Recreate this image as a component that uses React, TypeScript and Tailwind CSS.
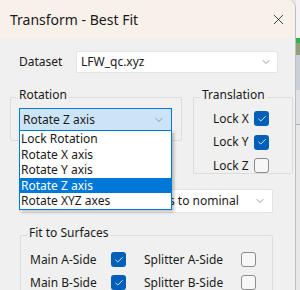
import React from 'react';
import { Check, ChevronDown, X } from 'lucide-react';

// Чекбокс в стиле Windows 11
function Box({ checked }: { checked?: boolean }) {
  return checked ? (
    <span className="w-[15px] h-[15px] rounded-[3px] bg-[#005fb8] flex items-center justify-center shrink-0">
      <Check className="w-[10px] h-[10px] text-white" strokeWidth={2} />
    </span>
  ) : (
    <span className="w-[15px] h-[15px] rounded-[3px] border border-[#8d8d8d] bg-[#f7f7f7] shrink-0" />
  );
}

function Group({ label, className, children }: { label: string; className: string; children?: React.ReactNode }) {
  return (
    <div className={`border border-[#dcdcdc] rounded-[2px] ${className}`}>
      <span className="block w-fit -mt-[11px] ml-[6px] px-[2px] bg-[#f0f0f0] leading-[16px]">{label}</span>
      {children}
    </div>
  );
}

const options = ['Lock Rotation', 'Rotate X axis', 'Rotate Y axis', 'Rotate Z axis', 'Rotate XYZ axes'];

export default function App() {
  return (
    <div className="w-[300px] h-[290px] flex bg-[#e6e6e6] overflow-hidden font-['Noto_Sans',sans-serif] text-[12px] text-[#1a1a1a]">
      {/* Окно диалога */}
      <div className="relative w-[296px] h-full flex flex-col rounded-tr-[8px] overflow-hidden border-r border-[#bdbdbd] bg-[#f0f0f0]">
        <header className="h-[38px] shrink-0 bg-[#f8f1ea] flex items-center justify-between pl-[10px] pr-[8px]">
          <span className="text-[14px]">Transform - Best Fit</span>
          <X className="w-[17px] h-[17px] text-[#222]" strokeWidth={1.2} />
        </header>

        <div className="flex-1 flex flex-col">
          {/* Dataset */}
          <div className="flex items-center mt-[13px] pl-[19px]">
            <span className="w-[57px]">Dataset</span>
            <div className="w-[202px] h-[22px] bg-white border border-[#e3e3e3] rounded-[2px] flex items-center justify-between pl-[4px] pr-[5px]">
              <span>LFW_qc.xyz</span>
              <ChevronDown className="w-[12px] h-[12px] text-[#777]" strokeWidth={1.5} />
            </div>
          </div>

          {/* Rotation / Translation */}
          <div className="flex items-start mt-[24px] pl-[10px]">
            <Group label="Rotation" className="w-[172px] h-[44px]">
              <div className="mt-[5px] ml-[8px] w-[153px] h-[23px] bg-[#cce4f7] border border-[#0078d7] flex items-center justify-between pl-[3px] pr-[6px]">
                <span>Rotate Z axis</span>
                <ChevronDown className="w-[12px] h-[12px] text-[#777]" strokeWidth={1.5} />
              </div>
            </Group>
            <Group label="Translation" className="ml-[11px] w-[100px] h-[77px]">
              <div className="mt-[4px] flex flex-col pl-[19px]">
                {[
                  ['Lock X', true],
                  ['Lock Y', true],
                  ['Lock Z', false],
                ].map(([l, c]) => (
                  <div key={l as string} className="h-[23.5px] flex items-center">
                    <span className="w-[41px]">{l}</span>
                    <Box checked={c as boolean} />
                  </div>
                ))}
              </div>
            </Group>
          </div>

          {/* Выравнивание: начало текста закрыто раскрытым списком */}
          <div className="mt-[15px] ml-[19px] w-[254px] h-[24px] bg-white border border-[#e3e3e3] rounded-[2px] flex items-center justify-between pl-[4px] pr-[6px]">
            <span className="whitespace-nowrap">Align coordinate base axes to nominal</span>
            <ChevronDown className="w-[12px] h-[12px] text-[#777] shrink-0" strokeWidth={1.5} />
          </div>

          {/* Fit to Surfaces */}
          <Group label="Fit to Surfaces" className="mt-[22px] ml-[20px] w-[253px] h-[80px]">
            <div className="mt-[7px] grid grid-cols-[114px_120px] pl-[9px]">
              {[
                ['Main A-Side', true],
                ['Splitter A-Side', false],
                ['Main B-Side', true],
                ['Splitter B-Side', false],
              ].map(([l, c]) => (
                <div key={l as string} className="h-[23px] flex items-center">
                  <span className={(l as string).startsWith('Main') ? 'w-[81px]' : 'w-[97px]'}>{l}</span>
                  <Box checked={c as boolean} />
                </div>
              ))}
            </div>
          </Group>
        </div>

        {/* Раскрытый список Rotation */}
        <ul className="absolute left-[19px] top-[130px] w-[153px] bg-white border border-[#0078d7] shadow-[2px_2px_3px_rgba(0,0,0,0.25)]">
          {options.map((o) => (
            <li
              key={o}
              className={`h-[15.5px] leading-[15.5px] pl-[1px] ${o === 'Rotate Z axis' ? 'bg-[#0078d7] text-white' : ''}`}
            >
              {o}
            </li>
          ))}
        </ul>
      </div>

      {/* Край соседнего окна */}
      <div className="flex-1 flex flex-col">
        <div className="h-[38px] bg-[#f3f3f3]" />
        <div className="h-[5px] bg-[#2fb34a]" />
        <div className="h-[12px] bg-[#8fa07a]" />
        <div className="h-[35px] bg-[#c9d0da]" />
        <div className="h-[35px] bg-[#dfe3e8] border-b border-[#b0b0b0]" />
        <div className="flex-1 bg-[#e8e8e8]" />
      </div>
    </div>
  );
}
